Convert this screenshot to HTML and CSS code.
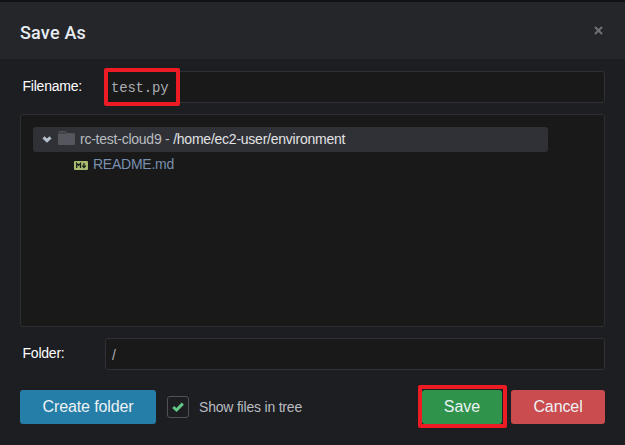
FILE: index.html
```html
<!DOCTYPE html>
<html lang="en">
<head>
<meta charset="utf-8">
<title>Save As</title>
<link rel="stylesheet" href="styles.css">
</head>
<body>
<main class="dialog">
  <header class="header">
    <h1 class="title">Save As</h1>
    <svg class="close" viewBox="0 0 9 9"><path d="M1 1 8 8M8 1 1 8"/></svg>
  </header>
  <div class="content">
    <div class="field">
      <span class="label">Filename:</span>
      <div class="input mono">test.py<span class="highlight name-highlight"></span></div>
    </div>
    <div class="tree">
      <div class="row selected">
        <svg class="arrow" viewBox="0 0 10 7"><path d="M1.5 1.3 5 4.7 8.5 1.3"/></svg>
        <svg class="folder" viewBox="0 0 17 15"><path class="tab" d="M1 4V1.5Q1 .5 2 .5H7Q8 .5 8 1.5V3H15.5"/><path class="front" d="M0 3H8L9 2.3H16Q17 2.3 17 3.3V13Q17 14 16 14H1Q0 14 0 13Z"/></svg>
        <span class="root">rc-test-cloud9 - <span class="path">/home/ec2-user/environment</span></span>
      </div>
      <div class="row child">
        <svg class="markdown" viewBox="0 0 14 9"><rect width="14" height="9" rx="1"/><path d="M2.7 7V2.4L4.6 4.4 6.5 2.4V7M10 2V6M8.2 4.6 10 6.5 11.8 4.6"/></svg>
        <span class="file">README.md</span>
      </div>
    </div>
    <div class="field">
      <span class="label">Folder:</span>
      <div class="input slash">/</div>
    </div>
    <footer class="footer">
      <div class="button create"><span>Create folder</span></div>
      <div class="checkbox"><svg viewBox="0 0 12 10"><path d="M1.2 5 4.5 8 10.8 1.6"/></svg></div>
      <span class="check-label">Show files in tree</span>
      <div class="button save"><span>Save</span><span class="highlight save-highlight"></span></div>
      <div class="button cancel"><span>Cancel</span></div>
    </footer>
  </div>
</main>
</body>
</html>
```
FILE: styles.css
```css
* { box-sizing: border-box; }
body { margin: 0; font-family: "Liberation Sans", Arial, sans-serif; background: #1d1e22; }
.dialog { width: 625px; height: 445px; border-top: 2px solid #111214; }
.header { height: 57px; padding: 0 22px 0 20px; display: flex; align-items: center; justify-content: space-between; background: #25262a; }
.title { margin: 5px 0 0; font: 500 18px/22px Roboto, sans-serif; letter-spacing: .2px; color: #e6ecf2; }
.close { width: 9px; height: 9px; margin-top: -1px; fill: none; stroke: #707173; stroke-width: 2; }
.content { padding: 12px 20px 0; }
.field { display: flex; height: 32px; }
.label { width: 85px; padding-left: 2.5px; font-size: 14px; line-height: 31px; letter-spacing: -.22px; color: #fff; white-space: nowrap; }
.input { position: relative; flex: 1; border: 1px solid #303136; border-radius: 3px; background: #19191a; padding-left: 5px; font-size: 14px; line-height: 33px; color: #a9adb1; }
.mono { font-family: "Liberation Mono", monospace; font-size: 14px; letter-spacing: -.2px; }
.slash { padding-left: 6px; }
.highlight { position: absolute; border: 4px solid #ed1c24; border-radius: 2px; }
.name-highlight { left: -2px; top: -4px; width: 76px; height: 38px; }
.tree { height: 213px; margin: 11px 0; padding: 12px; border: 1px solid #2e2f33; border-radius: 3px; background: #19191a; }
.row { display: flex; align-items: center; width: 515px; height: 25px; font-size: 14px; letter-spacing: -.24px; white-space: nowrap; }
.selected { padding-left: 9px; border-radius: 3px; background: #303136; }
.arrow { width: 10px; height: 7px; fill: none; stroke: #b4c0cb; stroke-width: 3; }
.folder { width: 17px; height: 15px; margin: -2px 5px 0 6px; }
.tab { fill: #414247; stroke: #505157; }
.front { fill: #56575e; }
.root { margin-top: -2px; color: #b9bdc1; }
.path { color: #e1e3e5; }
.child { padding-left: 41px; }
.markdown { width: 14px; height: 9px; margin: 1px 5px 0 0; }
.markdown rect { fill: #a8bb70; }
.markdown path { fill: none; stroke: #19201b; stroke-width: 1.3; }
.file { margin-top: -2px; color: #7890b0; }
.footer { display: flex; align-items: center; height: 34px; margin-top: 20px; }
.button { position: relative; display: flex; align-items: center; justify-content: center; height: 34px; border-radius: 3px; font-size: 16px; color: #edf2f5; white-space: nowrap; }
.create { width: 136px; background: #257ea8; letter-spacing: -.12px; }
.checkbox { display: flex; align-items: center; justify-content: center; width: 22px; height: 22px; margin: 0 10px 0 11px; border: 1px solid #515257; border-radius: 3px; }
.checkbox svg { width: 12px; height: 10px; fill: none; stroke: #63c787; stroke-width: 3; }
.check-label { margin-top: -1px; font-size: 14px; letter-spacing: -.2px; color: #b9bdc1; white-space: nowrap; }
.save { width: 80px; margin-left: auto; background: #2f934c; }
.save-highlight { left: -4px; top: -5px; width: 89px; height: 43px; }
.cancel { width: 94px; margin-left: 9px; background: #cb4c4f; letter-spacing: -.1px; }
```
